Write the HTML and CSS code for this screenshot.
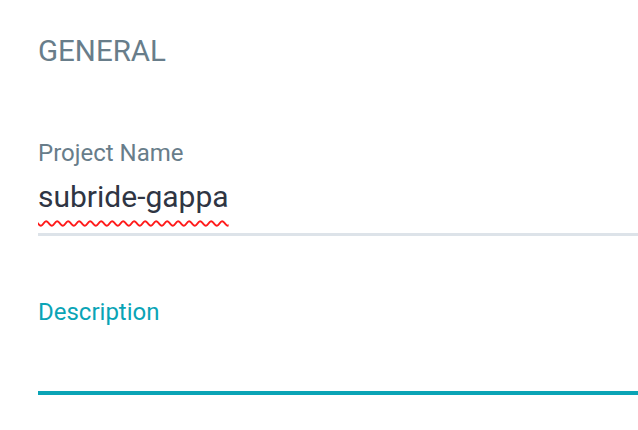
FILE: index.html
```html
<!DOCTYPE html>
<html>
<head>
<meta charset="utf-8">
<link rel="stylesheet" href="styles.css">
</head>
<body>
<div class="panel">
  <h2 class="section-title">GENERAL</h2>
  <div class="field field-name">
    <label class="field-label">Project Name</label>
    <div class="field-value"><span class="misspelled">subride-gappa</span></div>
    <div class="field-line"></div>
  </div>
  <div class="field field-focused">
    <label class="field-label">Description</label>
    <div class="field-value"></div>
    <div class="field-line"></div>
  </div>
</div>
</body>
</html>
```
FILE: styles.css
```css
html, body {
  margin: 0;
  padding: 0;
  background: #ffffff;
}
body {
  font-family: Roboto, "Noto Sans", sans-serif;
}
.panel {
  padding: 33px 0 0 38px;
}
.section-title {
  margin: 0;
  font-size: 29.5px;
  font-weight: 400;
  line-height: 36px;
  color: #687d8a;
}
.field {
  display: flex;
  flex-direction: column;
}
.field-name {
  margin-top: 70px;
}
.field-focused {
  margin-top: 62px;
}
.field-label {
  font-size: 24px;
  line-height: 28px;
  color: #687d8a;
}
.field-value {
  font-size: 30px;
  line-height: 36px;
  height: 36px;
  margin-top: 12px;
  color: #2f3543;
  white-space: nowrap;
}
.misspelled {
  text-decoration: underline wavy #ff1a1a;
  text-decoration-thickness: 2px;
  text-underline-offset: 13px;
}
.field-line {
  height: 3px;
  margin-top: 18px;
  background: #dde3e9;
}
.field-focused .field-label {
  color: #0aa4b6;
}
.field-focused .field-line {
  height: 4px;
  margin-top: 17px;
  background: #0aa4b6;
}
```
